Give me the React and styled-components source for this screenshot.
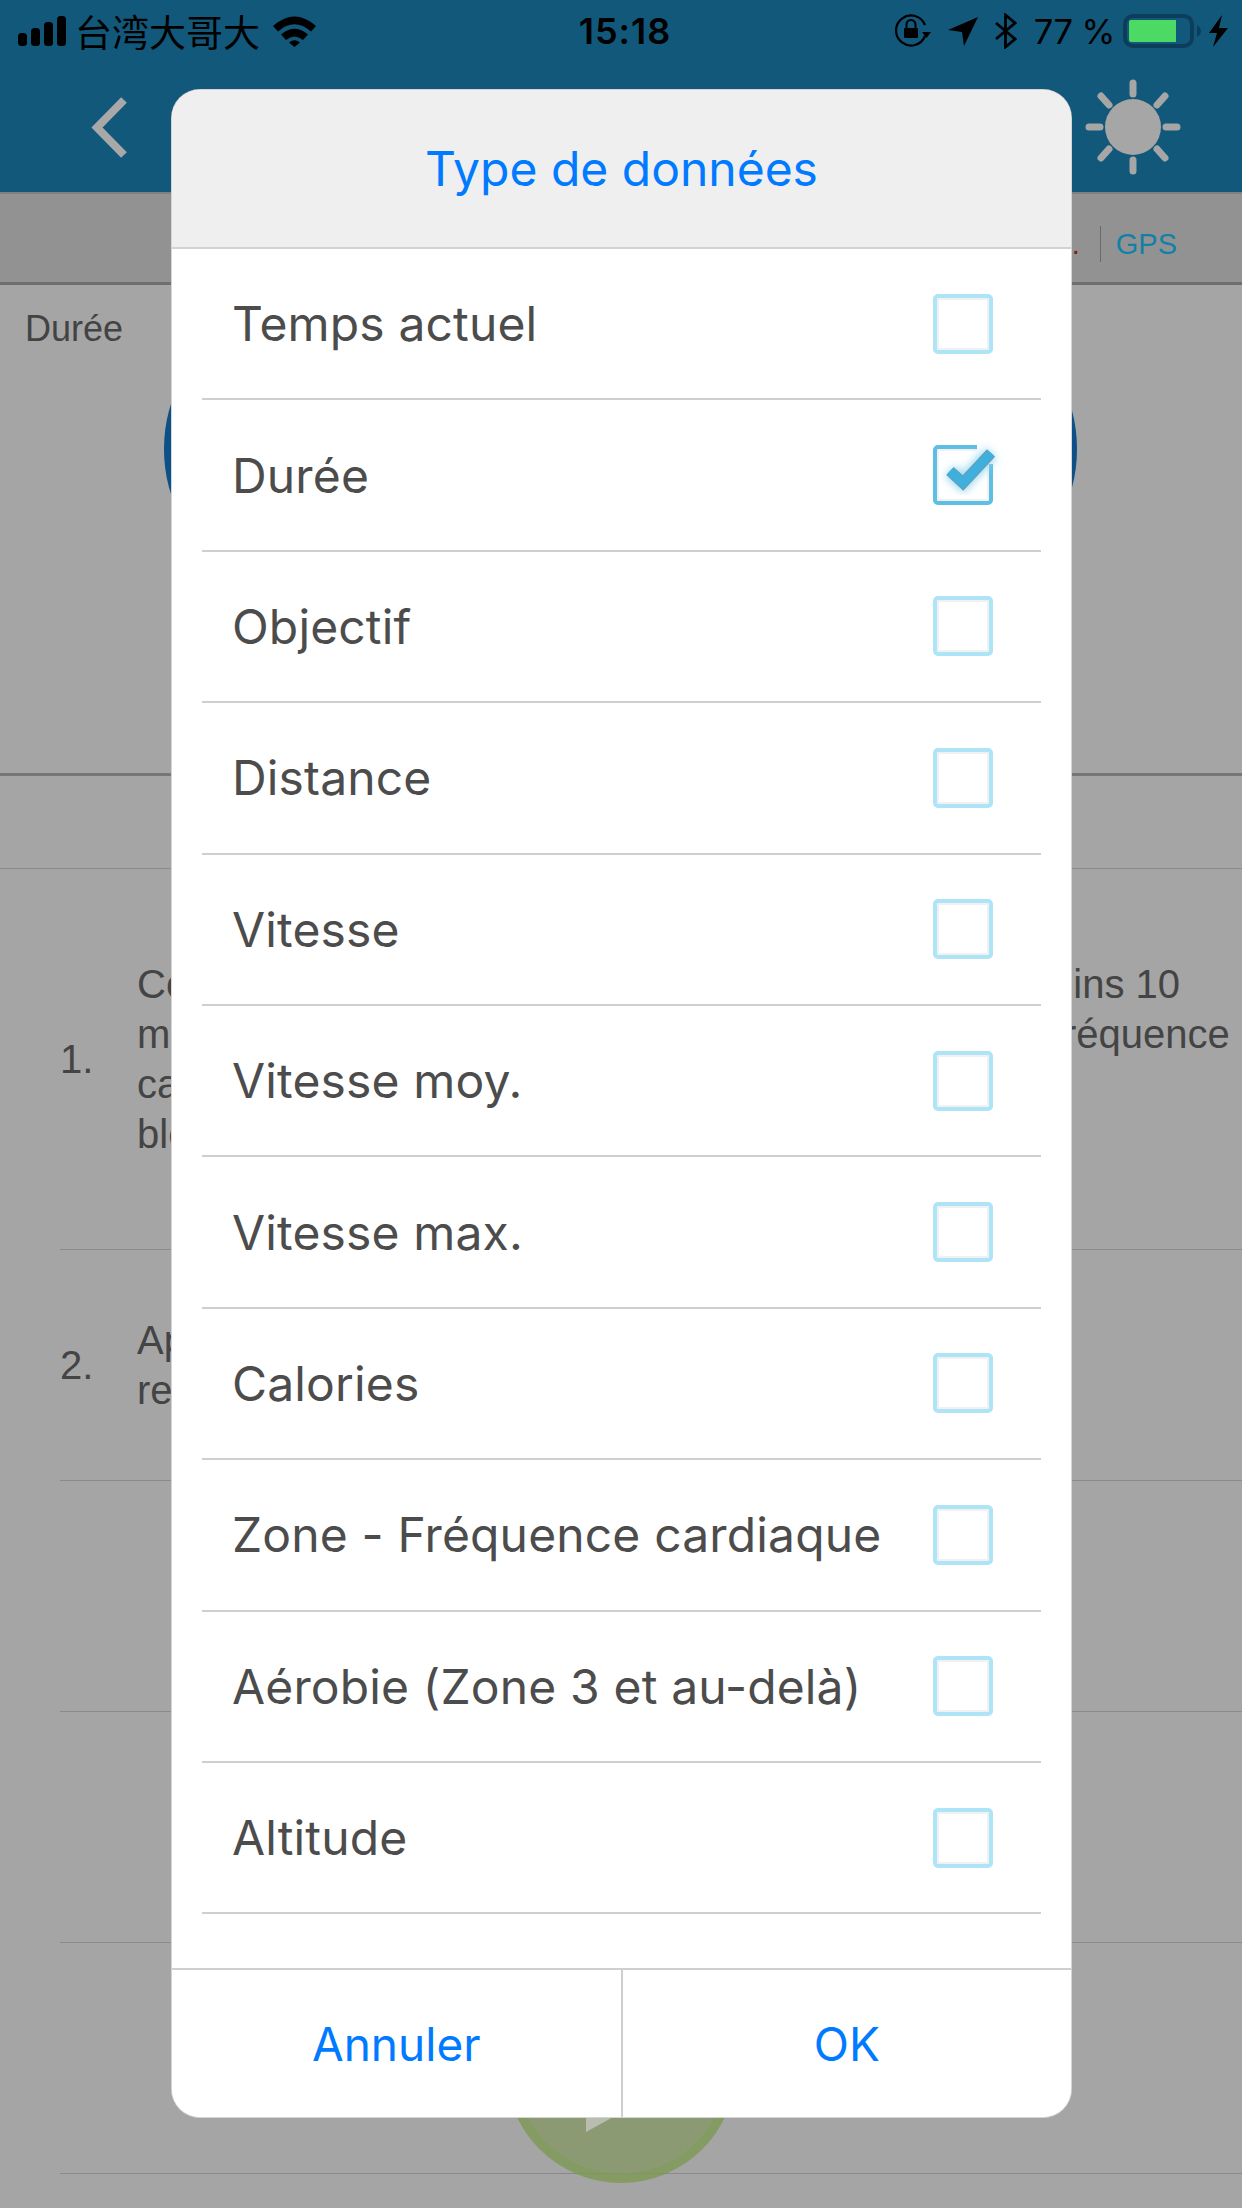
import React from "react";
import styled, { createGlobalStyle } from "styled-components";

const GlobalStyle = createGlobalStyle`
  html, body { margin: 0; padding: 0; background: #a5a5a5; }
  * { box-sizing: border-box; }
`;

const Screen = styled.div`
  position: relative;
  width: 1242px;
  height: 2208px;
  overflow: hidden;
  background: #a5a5a5;
  font-family: "Liberation Sans", Arial, sans-serif;
`;

const TopBar = styled.header`
  height: 192px;
  background: #12587b;
  color: #000;
`;

const StatusBar = styled.div`
  height: 62px;
  padding: 0 14px 0 18px;
  display: grid;
  grid-template-columns: 1fr auto 1fr;
  align-items: center;
`;

const StatusLeft = styled.div`
  display: flex;
  align-items: center;
  gap: 9px;
`;

const Carrier = styled.span`
  margin-right: 4px;
  font-family: "Noto Sans CJK SC", sans-serif;
  font-size: 37px;
  line-height: 40px;
`;

const Clock = styled.span`
  font-family: Inter, sans-serif;
  font-size: 36px;
  font-weight: 600;
  letter-spacing: 1px;
  padding-left: 4px;
`;

const StatusRight = styled.div`
  display: flex;
  align-items: center;
  justify-content: flex-end;
  gap: 17px;
`;

const BatteryGroup = styled.div`
  display: flex;
  align-items: center;
  gap: 8px;
`;

const Percent = styled.span`
  font-family: Inter, sans-serif;
  font-size: 34.500px;
  letter-spacing: -0.5px;
`;

const NavRow = styled.nav`
  height: 130px;
  padding: 0 61px 0 91px;
  display: flex;
  align-items: center;
  justify-content: space-between;
`;

const TabBar = styled.div`
  height: 93px;
  padding: 12px 65px 0 0;
  background: #929292;
  border-top: 2px solid #808080;
  border-bottom: 3px solid #6f6f6f;
  display: flex;
  align-items: center;
  justify-content: flex-end;
`;

const Tab = styled.span`
  font-size: 29px;
  line-height: 36px;
  color: ${(p) => (p.$active ? "#1280a8" : "#8c1a1a")};
  ${(p) => p.$active && "border-left: 1px solid #6a6a6a; margin-left: 20px; padding-left: 15px;"}
`;

const SummaryPanel = styled.section`
  height: 491px;
  padding-top: 24px;
  border-bottom: 3px solid #777;
  font-size: 36px;
  color: #434343;
`;

const SummaryLabel = styled.div`
  padding-left: 25px;
  line-height: 40px;
`;

const Gauge = styled.div`
  width: 913px;
  height: 200px;
  margin-left: 164px;
  background: #0d4f87;
  border-radius: 65px / 100px;
`;

const Spacer = styled.div`
  height: 93px;
  border-bottom: 1px solid #8a8a8a;
`;

const Steps = styled.ol`
  margin: 0 0 0 60px;
  padding: 0;
  list-style: none;
  color: #444;
  font-size: 40px;
`;

const Step = styled.li`
  height: ${(p) => p.$height}px;
  border-bottom: 1px solid #8a8a8a;
  display: flex;
  align-items: center;
`;

const StepNumber = styled.span`
  width: 77px;
  flex: none;
`;

const StepText = styled.div`
  line-height: 50px;
  white-space: nowrap;
`;

const PlayButton = styled.div`
  position: absolute;
  left: 506px;
  top: 1953px;
  width: 230px;
  height: 230px;
  border-radius: 50%;
  border: 10px solid rgba(124, 152, 84, 0.8);
  background: rgba(134, 151, 104, 0.8);
  background-clip: padding-box;
`;

const PlayIcon = styled.svg`
  position: absolute;
  left: 70px;
  top: 65px;
`;

const Dialog = styled.div`
  position: absolute;
  left: 172px;
  top: 90px;
  width: 899px;
  height: 2027px;
  display: flex;
  flex-direction: column;
  background: #fff;
  border-radius: 28px;
  overflow: hidden;
  box-shadow: 0 0 0 1px #d4d4d4;
  font-family: Inter, sans-serif;
`;

const DialogTitle = styled.h2`
  height: 159px;
  margin: 0;
  flex: none;
  background: #efefef;
  border-bottom: 2px solid #d2d2d2;
  color: #007aff;
  font-size: 48px;
  font-weight: 400;
  display: flex;
  align-items: center;
  justify-content: center;
`;

const OptionList = styled.div`
  flex: 1;
  margin: 0 30px;
`;

const OptionRow = styled.div`
  height: 151.4px;
  padding: 0 48px 0 30px;
  border-bottom: 2px solid #cfcfcf;
  color: #4c4c4c;
  font-size: 48px;
  letter-spacing: 0.15px;
  display: flex;
  align-items: center;
  justify-content: space-between;
`;

const Checkbox = styled.span`
  position: relative;
  width: 60px;
  height: 60px;
  flex: none;
  border: 4px solid ${(p) => (p.$checked ? "#5cbfe3" : "#ade4f8")};
  border-radius: 5px;
  box-shadow: inset 0 0 0 2px #f1f1f1;
  filter: blur(0.5px);
`;

const CheckMark = styled.svg`
  position: absolute;
  left: -4px;
  top: -4px;
  overflow: visible;
`;

const DialogActions = styled.div`
  height: 149px;
  flex: none;
  border-top: 2px solid #cfcfcf;
  display: flex;
`;

const DialogButton = styled.button`
  flex: 1;
  border: 0;
  background: #fff;
  color: #007aff;
  font-family: Inter, sans-serif;
  font-size: 46px;
  & + & { border-left: 2px solid #cfcfcf; }
`;

const OPTIONS = [
  "Temps actuel",
  "Durée",
  "Objectif",
  "Distance",
  "Vitesse",
  "Vitesse moy.",
  "Vitesse max.",
  "Calories",
  "Zone - Fréquence cardiaque",
  "Aérobie (Zone 3 et au-delà)",
  "Altitude",
];

function SignalIcon() {
  return (
    <svg width="48" height="30" viewBox="0 0 48 30">
      <rect x="0" y="17" width="9" height="13" rx="3.5" />
      <rect x="13" y="12" width="9" height="18" rx="3.5" />
      <rect x="26" y="6" width="9" height="24" rx="3.5" />
      <rect x="39" y="0" width="9" height="30" rx="3.5" />
    </svg>
  );
}

function WifiIcon() {
  return (
    <svg width="43" height="31" viewBox="0 0 43 31">
      <path d="M0 10 Q21.5 -9 43 10 L38 15.500 Q21.500 1 5 15.500Z" />
      <path d="M8 18.500 Q21.500 7 35 18.500 L30 24 Q21.500 17 13 24Z" />
      <path d="M16 26.500 Q21.500 22 27 26.500 L21.500 31Z" />
    </svg>
  );
}

function RotationLockIcon() {
  return (
    <svg width="36" height="34" viewBox="0 0 36 34" fill="none" stroke="#000">
      <path d="M30 22 A15 15 0 1 1 30 11" strokeWidth="2.200" />
      <path d="M27 18 H36 L31.500 24Z" fill="#000" stroke="none" />
      <rect x="9" y="14" width="14" height="10" rx="1" fill="#000" stroke="none" />
      <path d="M11.500 14 V10.500 A4.500 4.500 0 0 1 20.500 10.500 V14" strokeWidth="2" />
    </svg>
  );
}

function LocationIcon() {
  return (
    <svg width="30" height="29" viewBox="0 0 30 29">
      <path d="M0 13 L30 0 L16 29 L14 15Z" />
    </svg>
  );
}

function BluetoothIcon() {
  return (
    <svg width="22" height="36" viewBox="0 0 22 36" fill="none" stroke="#000" strokeWidth="2.800">
      <path d="M1 10 L20 26 L10.500 34 V2 L20 10 L1 26" />
    </svg>
  );
}

function BatteryIcon() {
  return (
    <svg width="78" height="34" viewBox="0 0 78 34">
      <rect x="2" y="2" width="67" height="30" rx="8" fill="none" stroke="#0c3e5c" strokeWidth="4" />
      <path d="M6 8 Q6 6 8 6 H53 V28 H8 Q6 28 6 26Z" fill="#4cd964" />
      <path d="M74 11 Q78 14 78 17 Q78 20 74 23Z" fill="#0c3e5c" />
    </svg>
  );
}

function BoltIcon() {
  return (
    <svg width="19" height="32" viewBox="0 0 19 32">
      <path d="M13 0 L0 18 H8 L4 32 L19 13 H10Z" />
    </svg>
  );
}

function BackIcon() {
  return (
    <svg width="37" height="63" viewBox="0 0 37 63" fill="none" stroke="#a8a8a8" strokeWidth="8">
      <path d="M33 4 L6 31.500 L33 59" />
    </svg>
  );
}

function SunIcon() {
  return (
    <svg width="96" height="96" viewBox="0 0 96 96" fill="#a6a6a6">
      <circle cx="48" cy="48" r="28" />
      <g stroke="#a6a6a6" strokeWidth="7" strokeLinecap="round">
        <path d="M48 4 V15 M48 81 V92 M4 48 H15 M81 48 H92" />
        <path d="M16 17 L24 26 M80 17 L72 26 M16 79 L24 70 M80 79 L72 70" />
      </g>
    </svg>
  );
}

function Check() {
  return (
    <CheckMark width="60" height="60" viewBox="0 0 60 60" fill="none">
      <defs>
        <filter id="glow" x="-40%" y="-40%" width="180%" height="180%">
          <feGaussianBlur stdDeviation="4" />
        </filter>
      </defs>
      <rect x="44" y="-2" width="18" height="21" fill="#fff" />
      <path d="M17 26 L30 38 L58 8" stroke="#8fd6f2" strokeWidth="14" filter="url(#glow)" />
      <path d="M17 26 L30 38 L58 8" stroke="#6f98ab" strokeWidth="11" />
      <path d="M17 26 L30 38 L58 8" stroke="#3fb0de" strokeWidth="9" />
    </CheckMark>
  );
}

export default function App() {
  return (
    <Screen>
      <GlobalStyle />
      <TopBar>
        <StatusBar>
          <StatusLeft>
            <SignalIcon />
            <Carrier>台湾大哥大</Carrier>
            <WifiIcon />
          </StatusLeft>
          <Clock>15:18</Clock>
          <StatusRight>
            <RotationLockIcon />
            <LocationIcon />
            <BluetoothIcon />
            <BatteryGroup>
              <Percent>77 %</Percent>
              <BatteryIcon />
              <BoltIcon />
            </BatteryGroup>
          </StatusRight>
        </StatusBar>
        <NavRow>
          <BackIcon />
          <SunIcon />
        </NavRow>
      </TopBar>
      <TabBar>
        <Tab>Durée..</Tab>
        <Tab $active>GPS</Tab>
      </TabBar>
      <SummaryPanel>
        <SummaryLabel>Durée</SummaryLabel>
        <Gauge />
      </SummaryPanel>
      <Spacer />
      <Steps>
        <Step $height={381}>
          <StepNumber>1.</StepNumber>
          <StepText>
            Commencez la séance par un échauffement d'au moins 10
            <br />
            minutes ; jusqu'à ce que vous atteigniez la zone de fréquence
            <br />
            cardiaque
            <br />
            bleue.
          </StepText>
        </Step>
        <Step $height={231}>
          <StepNumber>2.</StepNumber>
          <StepText>
            Appuyez sur le bouton pour démarrer
            <br />
            respectez votre objectif
          </StepText>
        </Step>
        <Step $height={231} />
        <Step $height={231} />
        <Step $height={231} />
      </Steps>
      <PlayButton>
        <PlayIcon width="96" height="104" viewBox="0 0 96 104">
          <path d="M0 0 L94 52 L0 104Z" fill="#b9bdb0" />
        </PlayIcon>
      </PlayButton>
      <Dialog>
        <DialogTitle>Type de données</DialogTitle>
        <OptionList>
          {OPTIONS.map((label) => (
            <OptionRow key={label}>
              {label}
              <Checkbox $checked={label === "Durée"}>
                {label === "Durée" && <Check />}
              </Checkbox>
            </OptionRow>
          ))}
        </OptionList>
        <DialogActions>
          <DialogButton>Annuler</DialogButton>
          <DialogButton>OK</DialogButton>
        </DialogActions>
      </Dialog>
    </Screen>
  );
}
